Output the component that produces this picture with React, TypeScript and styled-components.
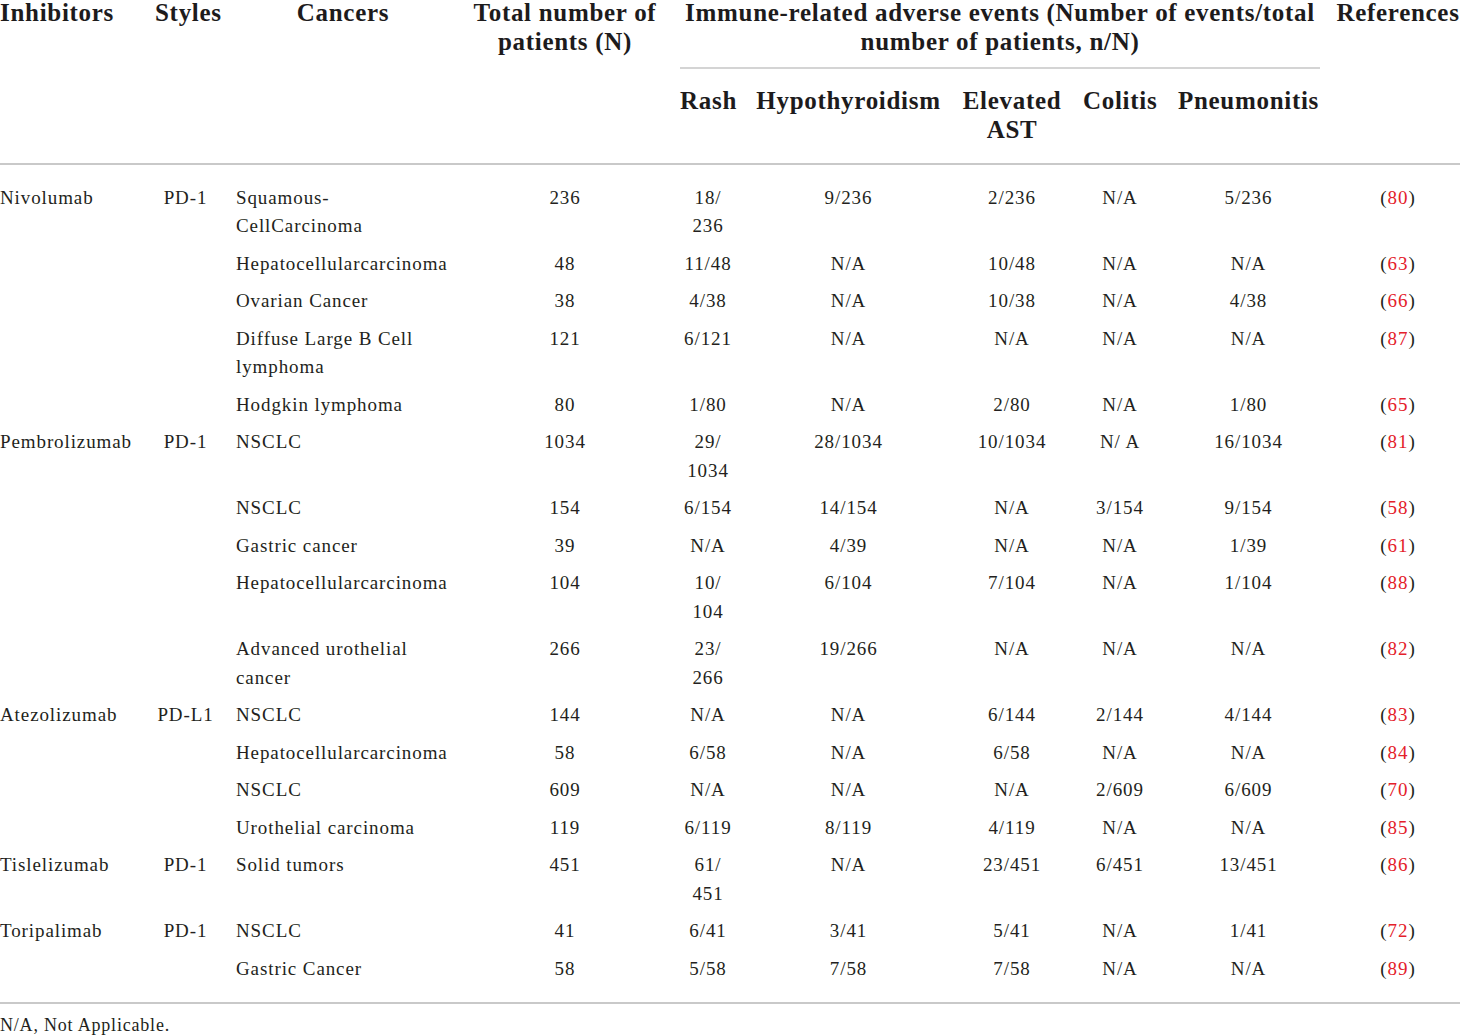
import React from "react";
import styled, { createGlobalStyle } from "styled-components";

const GlobalStyle = createGlobalStyle`
  html, body {
    margin: 0;
    padding: 0;
    background: #ffffff;
    overflow: hidden;
  }
  body {
    font-family: "Liberation Serif", "Times New Roman", serif;
    color: #231f20;
  }
`;

const Page = styled.div`
  width: 1460px;
  margin-top: -2px;
`;

const Table = styled.table`
  width: 1460px;
  border-collapse: collapse;
  table-layout: fixed;
`;

type Align = "left" | "center";
type Edge = "first" | "last" | "none";

const padFor = (edge: Edge) =>
  edge === "first" ? "0 10px 0 0" : edge === "last" ? "0 0 0 6px" : "0 10px";

const HeadCell = styled.th<{ $align: Align; $edge: Edge; $row: 1 | 2 }>`
  font-family: "Liberation Serif", "Times New Roman", serif;
  font-weight: 700;
  font-size: 25px;
  line-height: 29px;
  letter-spacing: 0.7px;
  color: #1d1b1c;
  text-align: ${(p) => p.$align};
  vertical-align: top;
  padding: ${(p) => padFor(p.$edge)};
  padding-top: ${(p) => (p.$row === 1 ? "0" : "17px")};
  padding-bottom: ${(p) => (p.$row === 1 ? "0" : "19px")};
  white-space: normal;
`;

const HeadRow = styled.tr<{ $last?: boolean }>`
  border-bottom: ${(p) => (p.$last ? "2px solid #c9c9c9" : "none")};
`;

const GroupRule = styled.span`
  display: block;
  margin-top: 11px;
  border-top: 2px solid #d4d4d4;
`;

const BodyRow = styled.tr<{ $pos: "first" | "middle" | "last" }>`
  border-bottom: ${(p) => (p.$pos === "last" ? "2px solid #c9c9c9" : "none")};
  & > td {
    padding-top: ${(p) => (p.$pos === "first" ? "18.5px" : "4.5px")};
    padding-bottom: ${(p) => (p.$pos === "last" ? "19px" : "4.5px")};
  }
`;

const BodyCell = styled.td<{ $align: Align; $edge: Edge }>`
  font-family: "Liberation Serif", "Times New Roman", serif;
  font-size: 19px;
  line-height: 28.5px;
  letter-spacing: 0.9px;
  color: #231f20;
  text-align: ${(p) => p.$align};
  vertical-align: top;
  padding-left: ${(p) => (p.$edge === "first" ? "0" : p.$edge === "last" ? "6px" : "10px")};
  padding-right: ${(p) => (p.$edge === "first" ? "10px" : p.$edge === "last" ? "0" : "10px")};
`;

const RefLink = styled.span`
  color: #e4202a;
`;

const Footnote = styled.p`
  margin: 8.5px 0 0 0;
  font-family: "Liberation Serif", "Times New Roman", serif;
  font-size: 18px;
  line-height: 24px;
  letter-spacing: 0.8px;
  color: #231f20;
`;

type Row = {
  inh?: string;
  style?: string;
  cancer: string;
  n: string;
  rash: string;
  hypo: string;
  ast: string;
  col: string;
  pneu: string;
  ref: string;
};

const rows: Row[] = [
  { inh: "Nivolumab", style: "PD-1", cancer: "Squamous-CellCarcinoma", n: "236", rash: "18/236", hypo: "9/236", ast: "2/236", col: "N/A", pneu: "5/236", ref: "80" },
  { cancer: "Hepatocellularcarcinoma", n: "48", rash: "11/48", hypo: "N/A", ast: "10/48", col: "N/A", pneu: "N/A", ref: "63" },
  { cancer: "Ovarian Cancer", n: "38", rash: "4/38", hypo: "N/A", ast: "10/38", col: "N/A", pneu: "4/38", ref: "66" },
  { cancer: "Diffuse Large B Cell lymphoma", n: "121", rash: "6/121", hypo: "N/A", ast: "N/A", col: "N/A", pneu: "N/A", ref: "87" },
  { cancer: "Hodgkin lymphoma", n: "80", rash: "1/80", hypo: "N/A", ast: "2/80", col: "N/A", pneu: "1/80", ref: "65" },
  { inh: "Pembrolizumab", style: "PD-1", cancer: "NSCLC", n: "1034", rash: "29/1034", hypo: "28/1034", ast: "10/1034", col: "N/ A", pneu: "16/1034", ref: "81" },
  { cancer: "NSCLC", n: "154", rash: "6/154", hypo: "14/154", ast: "N/A", col: "3/154", pneu: "9/154", ref: "58" },
  { cancer: "Gastric cancer", n: "39", rash: "N/A", hypo: "4/39", ast: "N/A", col: "N/A", pneu: "1/39", ref: "61" },
  { cancer: "Hepatocellularcarcinoma", n: "104", rash: "10/104", hypo: "6/104", ast: "7/104", col: "N/A", pneu: "1/104", ref: "88" },
  { cancer: "Advanced urothelial cancer", n: "266", rash: "23/266", hypo: "19/266", ast: "N/A", col: "N/A", pneu: "N/A", ref: "82" },
  { inh: "Atezolizumab", style: "PD-L1", cancer: "NSCLC", n: "144", rash: "N/A", hypo: "N/A", ast: "6/144", col: "2/144", pneu: "4/144", ref: "83" },
  { cancer: "Hepatocellularcarcinoma", n: "58", rash: "6/58", hypo: "N/A", ast: "6/58", col: "N/A", pneu: "N/A", ref: "84" },
  { cancer: "NSCLC", n: "609", rash: "N/A", hypo: "N/A", ast: "N/A", col: "2/609", pneu: "6/609", ref: "70" },
  { cancer: "Urothelial carcinoma", n: "119", rash: "6/119", hypo: "8/119", ast: "4/119", col: "N/A", pneu: "N/A", ref: "85" },
  { inh: "Tislelizumab", style: "PD-1", cancer: "Solid tumors", n: "451", rash: "61/451", hypo: "N/A", ast: "23/451", col: "6/451", pneu: "13/451", ref: "86" },
  { inh: "Toripalimab", style: "PD-1", cancer: "NSCLC", n: "41", rash: "6/41", hypo: "3/41", ast: "5/41", col: "N/A", pneu: "1/41", ref: "72" },
  { cancer: "Gastric Cancer", n: "58", rash: "5/58", hypo: "7/58", ast: "7/58", col: "N/A", pneu: "N/A", ref: "89" },
];

const colWidths = [145, 81, 234, 210, 76, 205, 122, 94, 163, 130];

/* allow a line break after a slash, as typeset tables do */
const Ratio: React.FC<{ value: string }> = ({ value }) => {
  const parts = value.split("/");
  return (
    <>
      {parts.map((part, i) => (
        <React.Fragment key={i}>
          {part}
          {i < parts.length - 1 && (
            <>
              /<wbr />
            </>
          )}
        </React.Fragment>
      ))}
    </>
  );
};

export default function App() {
  return (
    <Page>
      <GlobalStyle />
      <Table>
        <colgroup>
          {colWidths.map((w, i) => (
            <col key={i} style={{ width: `${w}px` }} />
          ))}
        </colgroup>
        <thead>
          <HeadRow>
            <HeadCell $row={1} $align="left" $edge="first" rowSpan={2}>Inhibitors</HeadCell>
            <HeadCell $row={1} $align="center" $edge="none" rowSpan={2}>Styles</HeadCell>
            <HeadCell $row={1} $align="center" $edge="none" rowSpan={2}>Cancers</HeadCell>
            <HeadCell $row={1} $align="center" $edge="none" rowSpan={2}>Total number of patients (N)</HeadCell>
            <HeadCell $row={1} $align="center" $edge="none" colSpan={5}>
              Immune-related adverse events (Number of events/total number of patients, n/N)
              <GroupRule />
            </HeadCell>
            <HeadCell $row={1} $align="center" $edge="last" rowSpan={2}>References</HeadCell>
          </HeadRow>
          <HeadRow $last>
            <HeadCell $row={2} $align="center" $edge="none">Rash</HeadCell>
            <HeadCell $row={2} $align="center" $edge="none">Hypothyroidism</HeadCell>
            <HeadCell $row={2} $align="center" $edge="none">Elevated AST</HeadCell>
            <HeadCell $row={2} $align="center" $edge="none">Colitis</HeadCell>
            <HeadCell $row={2} $align="center" $edge="none">Pneumonitis</HeadCell>
          </HeadRow>
        </thead>
        <tbody>
          {rows.map((r, i) => (
            <BodyRow key={i} $pos={i === 0 ? "first" : i === rows.length - 1 ? "last" : "middle"}>
              <BodyCell $align="left" $edge="first">{r.inh ?? ""}</BodyCell>
              <BodyCell $align="center" $edge="none">{r.style ?? ""}</BodyCell>
              <BodyCell $align="left" $edge="none">{r.cancer}</BodyCell>
              <BodyCell $align="center" $edge="none">{r.n}</BodyCell>
              <BodyCell $align="center" $edge="none"><Ratio value={r.rash} /></BodyCell>
              <BodyCell $align="center" $edge="none"><Ratio value={r.hypo} /></BodyCell>
              <BodyCell $align="center" $edge="none"><Ratio value={r.ast} /></BodyCell>
              <BodyCell $align="center" $edge="none"><Ratio value={r.col} /></BodyCell>
              <BodyCell $align="center" $edge="none"><Ratio value={r.pneu} /></BodyCell>
              <BodyCell $align="center" $edge="last">
                (<RefLink>{r.ref}</RefLink>)
              </BodyCell>
            </BodyRow>
          ))}
        </tbody>
      </Table>
      <Footnote>N/A, Not Applicable.</Footnote>
    </Page>
  );
}
